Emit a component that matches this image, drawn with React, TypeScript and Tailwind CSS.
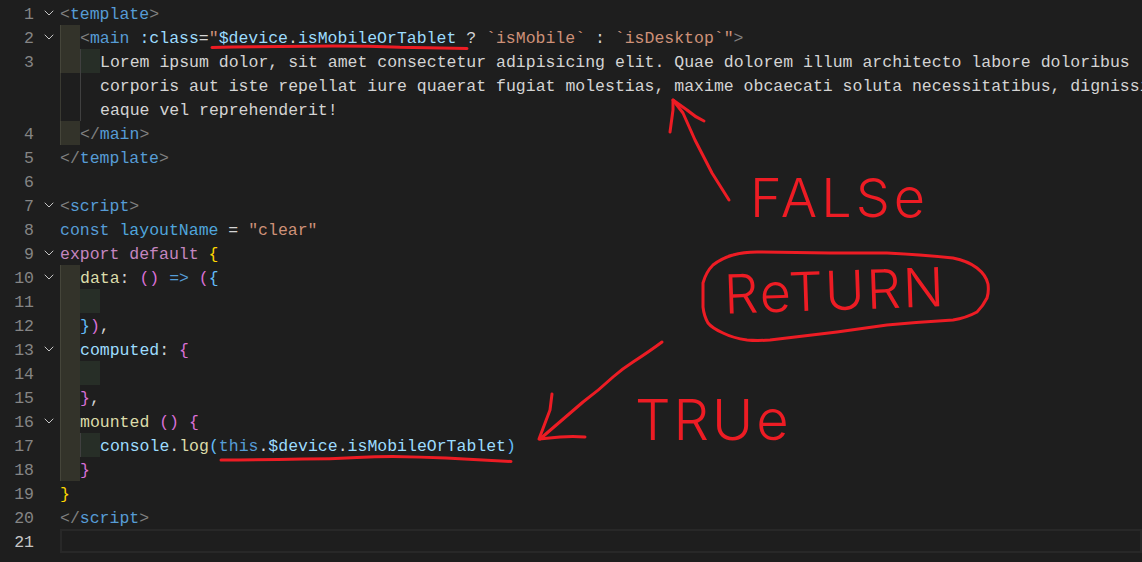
import { ChevronDown } from 'lucide-react';

// token colours
const punct = 'text-[#808080]';
const tag = 'text-[#569cd6]';
const attr = 'text-[#9cdcfe]';
const plain = 'text-[#d4d4d4]';
const str = 'text-[#ce9178]';
const kw = 'text-[#c586c0]';
const fn = 'text-[#dcdcaa]';
const varb = 'text-[#4fa5dc]';
const gold = 'text-[#ffd700]';
const pink = 'text-[#da70d6]';
const blue = 'text-[#62bcf8]';

type Token = [string, string];
type Row = { n?: number; fold?: boolean; guides?: string[]; tokens?: Token[]; active?: boolean };

const olive = 'bg-[#33332a] border-l border-l-[#45453a]';
const green = 'bg-[#272e27]';
const line1 = 'border-l border-l-[#3a3a32]';
const line2 = 'border-l border-l-[#404040]';

const rows: Row[] = [
  { n: 1, fold: true, tokens: [['<', punct], ['template', tag], ['>', punct]] },
  {
    n: 2,
    fold: true,
    guides: [olive],
    tokens: [
      ['<', punct],
      ['main', tag],
      [' ', plain],
      [':class', attr],
      ['=', plain],
      ['"', str],
      ['$device', attr],
      ['.', plain],
      ['isMobileOrTablet', attr],
      [' ? ', plain],
      ['`isMobile`', str],
      [' : ', plain],
      ['`isDesktop`', str],
      ['"', str],
      ['>', punct],
    ],
  },
  {
    n: 3,
    guides: [olive, `${green} ${line2}`],
    tokens: [['Lorem ipsum dolor, sit amet consectetur adipisicing elit. Quae dolorem illum architecto labore doloribus', plain]],
  },
  {
    guides: [line1, line2],
    tokens: [['corporis aut iste repellat iure quaerat fugiat molestias, maxime obcaecati soluta necessitatibus, dignissimos', plain]],
  },
  { guides: [line1, line2], tokens: [['eaque vel reprehenderit!', plain]] },
  { n: 4, guides: [olive], tokens: [['</', punct], ['main', tag], ['>', punct]] },
  { n: 5, tokens: [['</', punct], ['template', tag], ['>', punct]] },
  { n: 6 },
  { n: 7, fold: true, tokens: [['<', punct], ['script', tag], ['>', punct]] },
  {
    n: 8,
    tokens: [['const', tag], [' ', plain], ['layoutName', varb], [' = ', plain], ['"clear"', str]],
  },
  {
    n: 9,
    fold: true,
    tokens: [['export default', kw], [' ', plain], ['{', gold]],
  },
  {
    n: 10,
    fold: true,
    guides: [olive],
    tokens: [['data', fn], [': ', plain], ['()', pink], [' ', plain], ['=>', tag], [' ', plain], ['(', pink], ['{', blue]],
  },
  { n: 11, guides: [olive, green] },
  { n: 12, guides: [olive], tokens: [['}', blue], [')', pink], [',', plain]] },
  { n: 13, fold: true, guides: [olive], tokens: [['computed', attr], [': ', plain], ['{', pink]] },
  { n: 14, guides: [olive, green] },
  { n: 15, guides: [olive], tokens: [['}', pink], [',', plain]] },
  {
    n: 16,
    fold: true,
    guides: [olive],
    tokens: [['mounted', fn], [' ', plain], ['()', pink], [' ', plain], ['{', pink]],
  },
  {
    n: 17,
    guides: [olive, `${green} ${line2}`],
    tokens: [
      ['console', attr],
      ['.', plain],
      ['log', fn],
      ['(', blue],
      ['this', tag],
      ['.', plain],
      ['$device', attr],
      ['.', plain],
      ['isMobileOrTablet', attr],
      [')', blue],
    ],
  },
  { n: 18, guides: [olive], tokens: [['}', pink]] },
  { n: 19, tokens: [['}', gold]] },
  { n: 20, tokens: [['</', punct], ['script', tag], ['>', punct]] },
  { n: 21, active: true },
];

function CodeRow({ row }: { row: Row }) {
  return (
    <div className="flex h-6 leading-[27px]">
      <div className={`w-[34px] shrink-0 text-right ${row.active ? 'text-[#c6c6c6]' : 'text-[#858585]'}`}>{row.n}</div>
      <div className="flex w-[26px] shrink-0 items-center pl-[7px]">
        {row.fold && <ChevronDown size={16} strokeWidth={1.5} className="text-[#c5c5c5]" />}
      </div>
      <div className={`flex min-w-0 flex-1 ${row.active ? 'border-2 border-[#282828]' : ''}`}>
        {row.guides?.map((g, i) => (
          <div key={i} className={`h-full w-5 shrink-0 ${g}`}></div>
        ))}
        <div className="whitespace-pre">
          {row.tokens?.map((t, i) => (
            <span key={i} className={t[1]}>
              {t[0]}
            </span>
          ))}
        </div>
      </div>
    </div>
  );
}

// red marker scribbles on top of the editor
function Scribbles() {
  return (
    <svg className="absolute inset-0 h-full w-full" viewBox="0 0 1142 562" fill="none" stroke="#ed1c24" strokeWidth="3" strokeLinecap="round" strokeLinejoin="round">
      <path d="M212 47.5 Q232 47 253 46.7 L333 46 Q370 46 400 47.3 L467 48.5" />
      <path d="M221 460 Q260 460 303 459 Q330 459 357 457.5 Q375 456.5 393 456.5 Q420 457 446 458 L511 461.5" />
      <path d="M729 200 L712 173 L695 140 L683 113 L673 100" />
      <path d="M670 132 L673 110 L673 100 L687 110 Q695 117 704 121" />
      <path d="M733 255 Q743 252 757 252 L830 253 Q860 253 887 253 Q925 255 953 258 Q968 261 977 268 Q986 275 988 284 Q989 292 987 298 Q983 306 977 312 Q966 318 953 320 Q920 322 887 325 L837 332 L770 340 Q757 341 747 340 Q733 338 723 333 Q712 328 708 323 Q704 316 703 307 L703 283 Q706 272 713 265 Q722 258 733 255 Z" />
      <path d="M662 342 Q650 351 633 362 Q622 369 613 377 Q598 391 583 402 L540 439" />
      <path d="M552 394 L550 410 L539 439 L560 437 Q573 436 585 437" />
    </svg>
  );
}

export default function App() {
  return (
    <div className="relative h-[562px] w-[1142px] overflow-hidden bg-[#1e1e1e] pt-px font-['Liberation_Mono',monospace] text-[16.5px]">
      {rows.map((row, i) => (
        <CodeRow key={i} row={row} />
      ))}
      <Scribbles />
      <div className="absolute top-[162px] left-[750px] font-['Inter',sans-serif] text-[54px] leading-[72px] font-light tracking-[4px] text-[#ed1c24]">FALSe</div>
      <div className="absolute top-[255px] left-[724px] -rotate-2 font-['Inter',sans-serif] text-[54px] leading-[72px] font-light tracking-[2px] text-[#ed1c24]">ReTURN</div>
      <div className="absolute top-[384px] left-[635px] font-['Inter',sans-serif] text-[56px] leading-[72px] font-light tracking-[3px] text-[#ed1c24]">TRUe</div>
    </div>
  );
}
